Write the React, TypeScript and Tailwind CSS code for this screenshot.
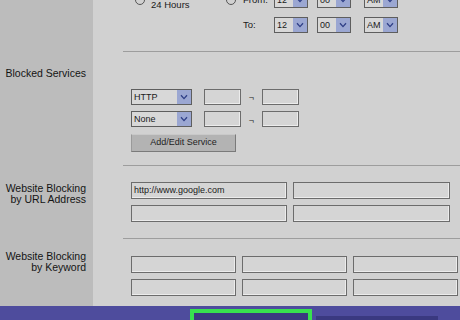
import React from 'react';

const Chevron = () => (
  <svg width="8" height="6" viewBox="0 0 8 6" fill="none">
    <path d="M1 1.2 L4 4.6 L7 1.2" stroke="#2f3f86" strokeWidth="1.3" />
  </svg>
);

const Select: React.FC<{ value: string; w: string }> = ({ value, w }) => (
  <div className={`${w} h-[16px] flex border border-[#5e5e5e] bg-[#d8d8d8]`}>
    <span className="flex-1 pl-[2px] text-[9px] leading-[14px] text-[#1a1a1a]">{value}</span>
    <div className="w-[14px] bg-[#9ba7d2] flex items-center justify-center">
      <Chevron />
    </div>
  </div>
);

const Field: React.FC<{ w: string; h?: string; value?: string }> = ({ w, h = 'h-[17px]', value }) => (
  <div
    className={`${w} ${h} border border-[#6c6c6c] bg-[#d5d5d5] shadow-[inset_-1px_-1px_0_#ececec] pl-[2px] text-[9px] text-[#1a1a1a] flex items-center`}
  >
    {value}
  </div>
);

const Radio = () => <div className="w-[10px] h-[10px] rounded-full border border-[#555] mt-[3px] shrink-0" />;

const Divider = () => <div className="ml-[30px] h-px bg-[#9d9d9d]" />;

const Label: React.FC<{ lines: string[]; pt: string }> = ({ lines, pt }) => (
  <div className={`w-[93px] shrink-0 bg-[#bcbcbc] pr-[7px] text-right text-[10.5px] leading-[11px] text-[#141414] ${pt}`}>
    {lines.map((l) => (
      <div key={l}>{l}</div>
    ))}
  </div>
);

export default function App() {
  return (
    <div className="w-[460px] h-[320px] overflow-hidden flex flex-col bg-[#d1d1d1] font-['Liberation_Sans',Arial,sans-serif]">
      {/* schedule */}
      <div className="flex h-[52px]">
        <div className="w-[93px] shrink-0 bg-[#bcbcbc]" />
        <div className="flex-1 flex flex-col">
          <div className="h-[51px] overflow-hidden">
            <div className="flex items-start pl-[42px] -mt-[8px]">
              <div className="w-[91px] flex items-start">
                <Radio />
                <span className="ml-[6px] mt-[7px] text-[9.5px] leading-[11px] text-[#1a1a1a]">24 Hours</span>
              </div>
              <Radio />
              <div className="ml-[7px] grid grid-cols-[31px_43px_47px_34px] gap-y-[9px] text-[9.5px] text-[#1a1a1a]">
                <span className="flex items-center">From:</span>
                <Select value="12" w="w-[34px]" />
                <Select value="00" w="w-[34px]" />
                <Select value="AM" w="w-[34px]" />
                <span className="flex items-center">To:</span>
                <Select value="12" w="w-[34px]" />
                <Select value="00" w="w-[34px]" />
                <Select value="AM" w="w-[34px]" />
              </div>
            </div>
          </div>
          <Divider />
        </div>
      </div>

      {/* blocked services */}
      <div className="flex h-[114px]">
        <Label lines={['Blocked Services']} pt="pt-[16px]" />
        <div className="flex-1 flex flex-col">
          <div className="h-[113px] pl-[38px] pt-[36px] flex flex-col gap-[5px]">
            {['HTTP', 'None'].map((s) => (
              <div key={s} className="flex items-center">
                <Select value={s} w="w-[61px]" />
                <div className="ml-[12px]">
                  <Field w="w-[37px]" h="h-[16px]" />
                </div>
                <span className="w-[21px] text-center text-[9px] pt-[4px] text-[#222]">¬</span>
                <Field w="w-[37px]" h="h-[16px]" />
              </div>
            ))}
            <button className="mt-[1px] w-[105px] h-[18px] bg-[#b3b3b3] border border-[#7a7a7a] border-t-[#c9c9c9] border-l-[#9a9a9a] text-[9px] text-[#1e1e1e]">
              Add/Edit Service
            </button>
          </div>
          <Divider />
        </div>
      </div>

      {/* url */}
      <div className="flex h-[73px]">
        <Label lines={['Website Blocking', 'by URL Address']} pt="pt-[17px]" />
        <div className="flex-1 flex flex-col">
          <div className="h-[72px] pl-[38px] pt-[16px] flex flex-col gap-[6px]">
            <div className="flex gap-[6px]">
              <Field w="w-[156px]" value="http://www.google.com" />
              <Field w="w-[157px]" />
            </div>
            <div className="flex gap-[6px]">
              <Field w="w-[156px]" />
              <Field w="w-[157px]" />
            </div>
          </div>
          <Divider />
        </div>
      </div>

      {/* keyword */}
      <div className="flex h-[67px]">
        <Label lines={['Website Blocking', 'by Keyword']} pt="pt-[12px]" />
        <div className="flex-1 pl-[38px] pt-[17px] flex flex-col gap-[6px]">
          {[0, 1].map((r) => (
            <div key={r} className="flex gap-[6px]">
              <Field w="w-[105px]" />
              <Field w="w-[105px]" />
              <Field w="w-[105px]" />
            </div>
          ))}
        </div>
      </div>

      {/* bottom bar */}
      <div className="h-[14px] bg-[#4e4c9d] flex items-start pl-[190px] pt-[3px]">
        <div className="w-[122px] h-[12px] border-[4px] border-b-0 border-[#38e14f] bg-[#3b3a80]" />
        <div className="ml-[4px] mt-[7px] w-[122px] h-[4px] bg-[#3a3980]" />
      </div>
    </div>
  );
}
